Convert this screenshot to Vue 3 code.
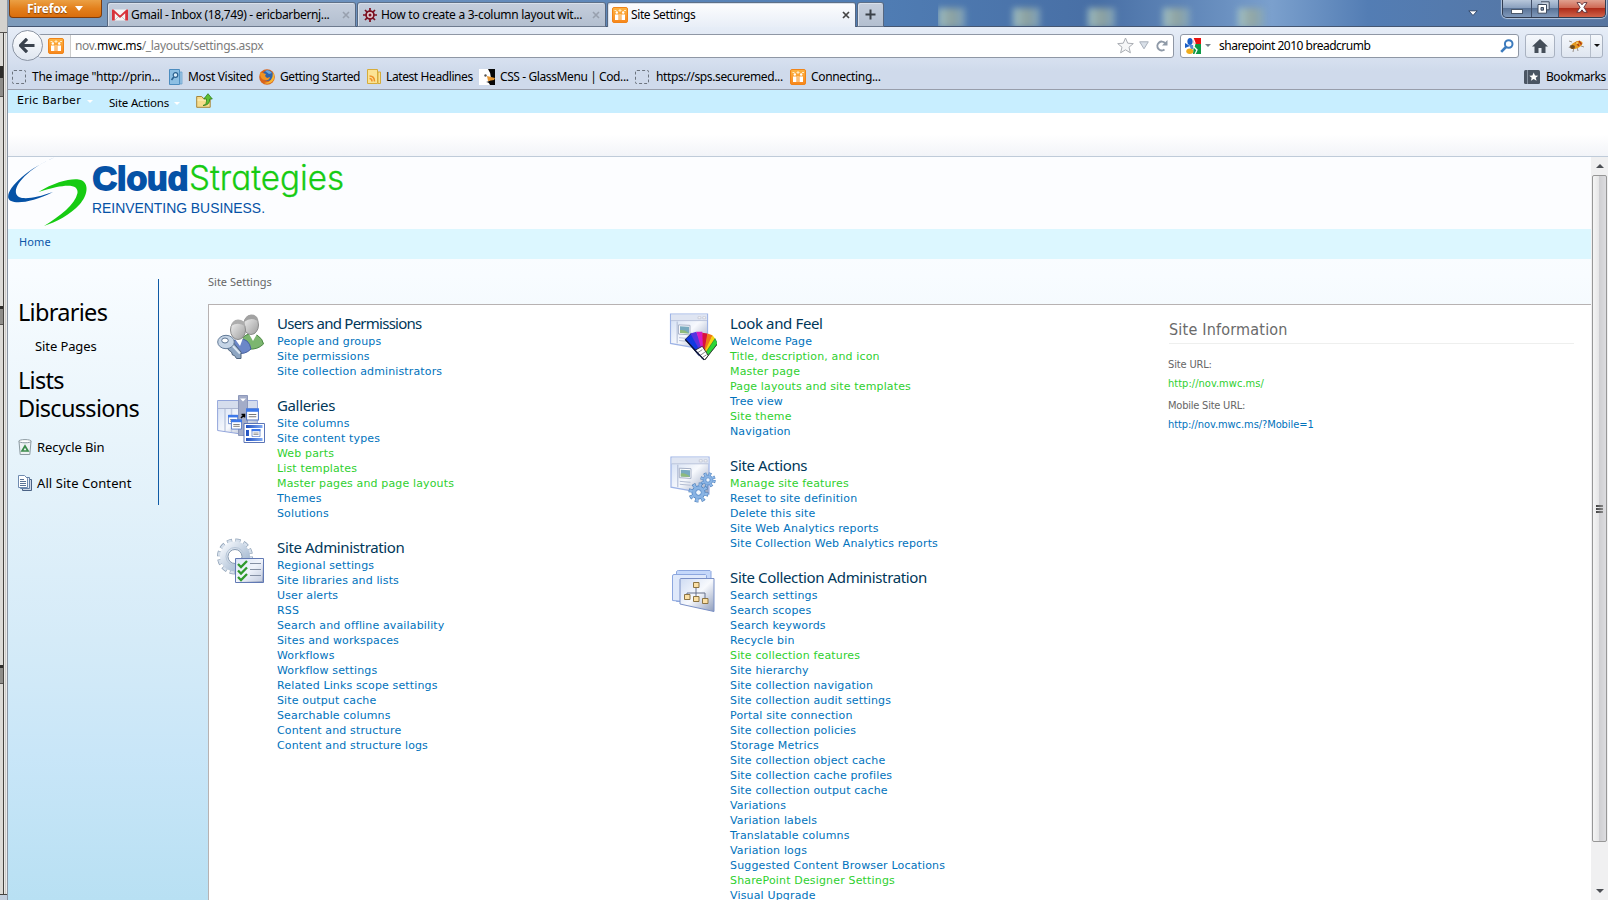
<script setup>
const green = (text) => ({ text, green: true })
const blue = (text) => ({ text, green: false })

const columns = [
  [
    {
      title: 'Users and Permissions',
      icon: 'users',
      links: [blue('People and groups'), blue('Site permissions'), blue('Site collection administrators')],
    },
    {
      title: 'Galleries',
      icon: 'galleries',
      links: [
        blue('Site columns'), blue('Site content types'), green('Web parts'), green('List templates'),
        green('Master pages and page layouts'), blue('Themes'), blue('Solutions'),
      ],
    },
    {
      title: 'Site Administration',
      icon: 'admin',
      links: [
        'Regional settings', 'Site libraries and lists', 'User alerts', 'RSS', 'Search and offline availability',
        'Sites and workspaces', 'Workflows', 'Workflow settings', 'Related Links scope settings',
        'Site output cache', 'Searchable columns', 'Content and structure', 'Content and structure logs',
      ].map(blue),
    },
  ],
  [
    {
      title: 'Look and Feel',
      icon: 'look',
      links: [
        blue('Welcome Page'), green('Title, description, and icon'), green('Master page'),
        green('Page layouts and site templates'), blue('Tree view'), green('Site theme'), blue('Navigation'),
      ],
    },
    {
      title: 'Site Actions',
      icon: 'actions',
      links: [
        green('Manage site features'), blue('Reset to site definition'), blue('Delete this site'),
        blue('Site Web Analytics reports'), blue('Site Collection Web Analytics reports'),
      ],
    },
    {
      title: 'Site Collection Administration',
      icon: 'collection',
      links: [
        blue('Search settings'), blue('Search scopes'), blue('Search keywords'), blue('Recycle bin'),
        green('Site collection features'), blue('Site hierarchy'), blue('Site collection navigation'),
        blue('Site collection audit settings'), blue('Portal site connection'), blue('Site collection policies'),
        blue('Storage Metrics'), blue('Site collection object cache'), blue('Site collection cache profiles'),
        blue('Site collection output cache'), blue('Variations'), blue('Variation labels'),
        blue('Translatable columns'), blue('Variation logs'), blue('Suggested Content Browser Locations'),
        green('SharePoint Designer Settings'), blue('Visual Upgrade'),
      ],
    },
  ],
]
</script>

<template>
  <div class="screen">
    <svg class="defs" width="0" height="0">
      <defs>
        <linearGradient id="gOrange" x1="0" y1="0" x2="0" y2="1">
          <stop offset="0" stop-color="#fdb544" /><stop offset="1" stop-color="#f7861b" />
        </linearGradient>
        <linearGradient id="gPane" x1="0" y1="0" x2="1" y2="1">
          <stop offset="0" stop-color="#cfdcf3" /><stop offset=".5" stop-color="#f7f9fd" /><stop offset="1" stop-color="#8f9dbb" />
        </linearGradient>
        <linearGradient id="gHead" x1="0" y1="0" x2="1" y2="1">
          <stop offset="0" stop-color="#f4f4f4" /><stop offset="1" stop-color="#9c9c9c" />
        </linearGradient>
        <linearGradient id="gGear" x1="0" y1="0" x2="1" y2="1">
          <stop offset="0" stop-color="#f1f5fa" /><stop offset="1" stop-color="#9db3cd" />
        </linearGradient>
        <linearGradient id="gBar" x1="0" y1="0" x2="1" y2="0">
          <stop offset="0" stop-color="#1f4fc0" /><stop offset="1" stop-color="#7fa9f3" />
        </linearGradient>
        <symbol id="people" viewBox="0 0 16 16">
          <rect x=".5" y=".5" width="15" height="15" rx="1.5" fill="url(#gOrange)" stroke="#f08418" />
          <path d="M3 7.500h3.500V13H3zM9.500 7.500H13V13H9.500z" fill="#fff" />
          <circle cx="4.800" cy="5.500" r="1.200" fill="#fff" /><circle cx="11.200" cy="5.500" r="1.200" fill="#fff" />
          <path d="M2.500 3.500h2M8 2v3M6.500 3.500h3M12 3.500h2M8 7v6" stroke="#ffe9c4" stroke-width="1" />
        </symbol>
        <symbol id="window" viewBox="0 0 42 40">
          <path d="M1 1h39v38L1 32z" fill="url(#gPane)" stroke="#9db3e6" stroke-width="1.200" />
          <path d="M1.500 1.500h38V8h-38z" fill="#dfe5f2" />
          <path d="M1.500 8h38" stroke="#b9c3da" />
          <path d="M30 4h3v2h-3zM35 4h3v2h-3z" fill="#fff" stroke="#b2b7c6" stroke-width=".6" />
          <path d="M8 9v23" stroke="#a9b4cf" />
          <path d="M9.500 12.500l12 .5v10l-12-.8z" fill="#fff" stroke="#a2aec4" />
          <path d="M11 14l9.500.5v7l-9.500-.6z" fill="#78aabf" />
          <path d="M11 18q5-1 9.500 3.500L11 21z" fill="#8ebb7b" />
          <path d="M10 26l11 1M10 29l11 1" stroke="#b1bbd2" />
        </symbol>
        <symbol id="cog" viewBox="-12 -12 24 24">
          <circle r="8" fill="none" stroke="#4779b4" stroke-width="7" stroke-dasharray="3.400 2.880" />
          <circle r="7.500" fill="#89b3e3" stroke="#4c82c4" />
          <circle r="8.800" fill="none" stroke="#8fb9e8" stroke-width="4" stroke-dasharray="2.700 4.210" stroke-dashoffset="-.5" />
          <circle r="3.200" fill="#f2f7fd" stroke="#4c82c4" />
        </symbol>
        <symbol id="doc" viewBox="0 0 12 11">
          <path d="M.5.5h11v10H.5z" fill="#fff" stroke="#5679c6" />
          <path d="M0 0h12v3H0z" fill="#3c78ea" />
          <path d="M2.500 5.500h7M2.500 7.500h7" stroke="#777" />
        </symbol>
      </defs>
    </svg>

    <aside class="behind">
      <i class="seg s1"></i><i class="seg s2"></i><i class="seg s3"></i>
    </aside>

    <main class="browser">
      <header class="titlebar">
        <div class="fx-button">Firefox<i class="tri"></i></div>
        <div class="tabs">
          <div class="tab">
            <svg width="16" height="16" viewBox="0 0 16 16"><path d="M0 2.500h16v11H0z" fill="#f5f5f5" /><path d="M3 13l5-5 5 5" fill="none" stroke="#c8c8c8" /><path d="M0 2.500h1.500L8 8.500l6.500-6H16v11h-2.800V6.200L8 11 2.800 6.200v7.300H0z" fill="#d8333a" /></svg>
            <span class="label t1">Gmail - Inbox (18,749) - ericbarbernj...</span>
            <svg class="x" width="8" height="8" viewBox="0 0 8 8"><path d="M1 1l6 6M7 1L1 7" stroke="#98a0ae" stroke-width="1.600" /></svg>
          </div>
          <div class="tab">
            <svg width="16" height="16" viewBox="-8 -8 16 16"><circle r="4" fill="none" stroke="#7b0f20" stroke-width="1.600" /><path d="M0-7V7M-7 0H7M-5-5L5 5M5-5L-5 5" stroke="#7b0f20" stroke-width="1.700" /><circle r="3" fill="#e4ccd2" /><circle r="1.500" fill="#7b0f20" /></svg>
            <span class="label t2">How to create a 3-column layout wit...</span>
            <svg class="x" width="8" height="8" viewBox="0 0 8 8"><path d="M1 1l6 6M7 1L1 7" stroke="#98a0ae" stroke-width="1.600" /></svg>
          </div>
          <div class="tab active">
            <svg width="16" height="16"><use href="#people" /></svg>
            <span class="label t3">Site Settings</span>
            <svg class="x" width="8" height="8" viewBox="0 0 8 8"><path d="M1 1l6 6M7 1L1 7" stroke="#444" stroke-width="1.700" /></svg>
          </div>
          <div class="tab plus">
            <svg width="11" height="11" viewBox="0 0 11 11"><path d="M5.500.5v10M.5 5.500h10" stroke="#3b4148" stroke-width="2" /></svg>
          </div>
        </div>
        <div class="glass">
          <i class="folder" v-for="n in 5" :key="n"></i>
        </div>
        <svg class="tablist" width="10" height="7" viewBox="0 0 10 7"><path d="M.8.8h8.400L5 5.500z" fill="#fff" stroke="#33496b" /></svg>
        <div class="winbtns">
          <span class="wb min"><svg width="14" height="7" viewBox="0 0 14 7"><rect x="1.500" y="1.500" width="11" height="4" fill="#fff" stroke="#4b586b" /></svg></span>
          <span class="wb max"><svg width="13" height="13" viewBox="0 0 13 13"><path d="M4 .8h8.200v8H10" fill="#cdd6e3" stroke="#3f4b5f" /><path d="M1 3.500h8.500v8.700H1z" fill="#fff" stroke="#3f4b5f" /><path d="M4 6.500h2.500v2.700H4z" fill="#8796ad" stroke="#3f4b5f" /></svg></span>
          <span class="wb close"><svg width="12" height="11" viewBox="0 0 12 11"><path d="M1 .6h3.200L6 2.800 7.800.6H11L7.900 5.300l3.300 5H7.800L6 7.800l-1.800 2.500H.8l3.300-5z" fill="#fff" stroke="#5a3038" stroke-width=".9" /></svg></span>
        </div>
      </header>

      <section class="navbar">
        <div class="back"><svg width="17" height="15" viewBox="0 0 17 15"><path d="M8 .8L1.500 7.500 8 14.200M2 7.500h13.500" fill="none" stroke="#3a424d" stroke-width="3.200" /></svg></div>
        <div class="urlbar">
          <span class="ident"><svg width="16" height="16"><use href="#people" /></svg></span>
          <span class="url">nov.<b>mwc.ms</b>/_layouts/settings.aspx</span>
          <svg class="star" width="17" height="17" viewBox="0 0 17 17"><path d="M8.500 1l2.200 5.200 5.600.4-4.300 3.600 1.400 5.600-4.900-3-4.900 3L5 10.200.7 6.600l5.600-.4z" fill="#f6f7f8" stroke="#a9adb3" /></svg>
          <svg width="10" height="9" viewBox="0 0 10 9"><path d="M.7.8h8.600L5 7.800z" fill="#d9e0e8" stroke="#a8b0bb" /></svg>
          <svg class="reload" width="12" height="12" viewBox="0 0 12 12"><path d="M8.500 9.500A4.400 4.400 0 1 1 9 3" fill="none" stroke="#8e99a7" stroke-width="2" /><path d="M11.500 0v5.500H6z" fill="#8e99a7" /></svg>
        </div>
        <div class="search">
          <svg width="16" height="16" viewBox="0 0 16 16"><path d="M8 0h8v6H9z" fill="#e8110f" /><path d="M9 6h7v10H8z" fill="#0d9a46" /><ellipse cx="5" cy="3.500" rx="2.600" ry="3.500" fill="#1b5fc6" /><path d="M0 5l5 3-5 2z" fill="#1b5fc6" /><path d="M4 7h4v4H6z" fill="#5a8cd8" /><ellipse cx="4.800" cy="13.300" rx="3.500" ry="2.700" fill="#f0ac1b" /><path d="M8 0l2 5-1 4 3 3-2 4" fill="none" stroke="#fff" stroke-width="1.300" /></svg>
          <i class="dd"></i>
          <span class="query">sharepoint 2010 breadcrumb</span>
          <svg width="14" height="14" viewBox="0 0 14 14"><circle cx="8.700" cy="5" r="3.800" fill="none" stroke="#3d7bbd" stroke-width="2" /><path d="M6 8L1.200 12.800" stroke="#3d7bbd" stroke-width="2.600" /></svg>
        </div>
        <div class="tbtn home"><svg width="16" height="14" viewBox="0 0 16 14"><path d="M8 0l8 7.500h-2.500V14h-4V9h-3v5h-4V7.500H0z" fill="#454e59" /></svg></div>
        <div class="tbtn bug">
          <span class="bugimg"><svg width="17" height="14" viewBox="0 0 17 14"><path d="M3 6L1 9M6 8l-1 5M9 8l1 4M4 3L1 2M13 7l3 1" stroke="#9a938c" /><ellipse cx="8.500" cy="6" rx="6.500" ry="3.400" transform="rotate(-25 8.500 6)" fill="#e59a20" /><ellipse cx="4.500" cy="8" rx="2.500" ry="2" fill="#6d4a20" /><path d="M8 3l3 4M11 2l2.500 3.500" stroke="#b13c16" stroke-width="1.500" /><circle cx="9" cy="4" r="1" fill="#ffe27a" /></svg></span>
          <span class="bugdd"><i class="dd dark"></i></span>
        </div>
      </section>

      <section class="bookmarks">
        <i class="dashed"></i><span class="bm b1">The image "http://prin...</span>
        <svg width="16" height="16" viewBox="0 0 16 16"><path d="M1.500.5h10v15h-10z" fill="#8dbfe3" stroke="#4c8cbf" /><path d="M12 3h2v12h-2z" fill="#a7cdea" stroke="#5d98c6" stroke-width=".7" /><circle cx="7.500" cy="6" r="2.300" fill="#d9edfa" stroke="#2c618f" stroke-width="1.200" /><path d="M5.800 8L3.500 11" stroke="#2c618f" stroke-width="1.600" /></svg>
        <span class="bm b2">Most Visited</span>
        <svg width="16" height="16" viewBox="0 0 16 16"><circle cx="8" cy="8" r="7.800" fill="#d9641b" /><circle cx="8.800" cy="6.500" r="5.300" fill="#2e63ab" /><path d="M6 2q4-2 7 2l-3 1z" fill="#6aa7de" /><path d="M1 3q2 1 3 1l3 1-1 2 2 2 3-1q-1 4-5 3Q1 11 1 3z" fill="#f29422" /><path d="M14 3q3 6-1 10-4 3-8 1 9 0 9-11z" fill="#f7b632" /></svg>
        <span class="bm b3">Getting Started</span>
        <svg width="14" height="15" viewBox="0 0 14 15"><path d="M.5.5h10v14H.5zM11 3h2.500v11.500H11z" fill="#fbe394" stroke="#d6ac3a" /><path d="M2.500 7q5 0 5 5.500M2.500 9.500q2.500 0 2.500 3" fill="none" stroke="#ef922c" stroke-width="1.500" /></svg>
        <span class="bm b4">Latest Headlines</span>
        <svg width="16" height="16" viewBox="0 0 16 16"><path d="M0 0h16v16H0z" fill="#fff" /><path d="M9 0h7v16h-5q-1-3-4-3 5-1 5-4 0-5-3-9z" fill="#080808" /><path d="M8 7l8 2-1 2-6 1z" fill="#e7962f" /><circle cx="6.500" cy="6.500" r="1.200" fill="#555" /></svg>
        <span class="bm b5">CSS - GlassMenu | Cod...</span>
        <i class="dashed"></i><span class="bm b6">https://sps.securemed...</span>
        <svg width="16" height="16"><use href="#people" /></svg>
        <span class="bm b7">Connecting...</span>
        <span class="spring"></span>
        <svg width="16" height="14" viewBox="0 0 16 14"><rect width="16" height="14" rx="1.500" fill="#4a5563" /><path d="M3.500 0v14" stroke="#8793a1" /><path d="M9.700 2.500l1.300 3 3.200.2-2.500 2 .9 3.100-2.900-1.800-2.800 1.800.8-3.100-2.400-2 3.100-.2z" fill="#fff" /></svg>
        <span class="bm b8">Bookmarks</span>
      </section>

      <section class="ribbon">
        <span class="user">Eric Barber</span><i class="wtri"></i>
        <span class="sact">Site Actions</span><i class="wtri w2"></i>
        <svg width="17" height="15" viewBox="0 0 17 15"><path d="M.7 3.500h5l1.500 1.800h7v9H.7z" fill="#f6dc8c" stroke="#a5853a" /><path d="M1.500 7h12" stroke="#fff2c4" /><path d="M7 12.500q4-.5 3.500-6.500H7.800L12 .7l4.300 5.300h-2.600q0 6.500-6.700 6.500z" fill="#5fc032" stroke="#2f7d1b" stroke-width=".8" /></svg>
      </section>
      <section class="blank"></section>

      <div class="page">
        <div class="content">
          <div class="logo">
            <svg width="345" height="72" viewBox="0 0 345 72">
              <path d="M47 .3C20 11-1 31 .2 40.500 1 48 22 47 45 35 25 42 9.500 44 8 36 6 27 24 9 47 .3z" fill="#0552a6" />
              <path d="M30.500 35C48 24 66 20.500 73 23c9 4 6 16-1 24-10 11-24 18-36 22 16-10 31-21 33.500-33 1-9-11-10-39-1z" fill="#16cb12" />
              <text class="cloud" x="84.500" y="33" textLength="96" lengthAdjust="spacingAndGlyphs">Cloud</text>
              <text class="strat" x="181" y="33" textLength="155" lengthAdjust="spacingAndGlyphs">Strategies</text>
              <text class="reinv" x="84" y="55.500" textLength="173" lengthAdjust="spacingAndGlyphs">REINVENTING BUSINESS.</text>
            </svg>
          </div>
          <nav class="topnav">Home</nav>
          <div class="body">
            <aside class="quick">
              <h2 class="q1">Libraries</h2>
              <p class="sp">Site Pages</p>
              <h2 class="q2">Lists</h2>
              <h2 class="q3">Discussions</h2>
              <p class="ic rb">
                <svg width="14" height="16" viewBox="0 0 14 16"><path d="M1 2.500h12L11.800 15.500H2.200z" fill="#eef2f3" stroke="#8c9aa1" /><ellipse cx="7" cy="2.200" rx="6.300" ry="1.600" fill="#fff" stroke="#8c9aa1" /><path d="M7 7l3 5H4z" fill="none" stroke="#3c8c4c" stroke-width="1.700" /></svg>
                <span>Recycle Bin</span>
              </p>
              <p class="ic asc">
                <svg width="14" height="16" viewBox="0 0 14 16"><path d="M4.500 4.500h9v11h-9z" fill="#cfd9e8" stroke="#4a6285" /><path d="M2.500 2.500h9v11h-9z" fill="#e6edf6" stroke="#6580a6" /><path d="M.5.500h6l3 3v9h-9z" fill="#fff" stroke="#6f8bb0" /><path d="M2 4.500h4M2 6.500h6M2 8.500h6M2 10.500h6" stroke="#5a7396" /></svg>
                <span>All Site Content</span>
              </p>
            </aside>
            <div class="right">
              <div class="crumb">Site Settings</div>
              <div class="panel">
                <div class="col" v-for="(col, ci) in columns" :key="ci">
                  <section class="group" :class="g.icon" v-for="g in col" :key="g.title">
                    <div class="gicon">
                      <svg v-if="g.icon === 'users'" width="48" height="48" viewBox="0 0 48 48">
                        <path d="M25 24q8-7 15-3 6 4 6.500 9-6 6-15 5z" fill="#7cb66f" stroke="#4e8846" />
                        <path d="M32 20l8 0-4 7z" fill="#fff" />
                        <ellipse cx="34" cy="11" rx="7.500" ry="9.500" fill="url(#gHead)" stroke="#8a8a8a" />
                        <path d="M27 8q1-7 7-7.500 7 0 7.500 7-7-5-14.500.5z" fill="#a2a2a2" />
                        <path d="M14 31q2-6 8-6 10-1 12 10-6 6-14 4z" fill="#6b87c8" stroke="#45609f" />
                        <path d="M18 25l8-1-3 8z" fill="#fff" />
                        <ellipse cx="21" cy="16" rx="7.500" ry="9.500" fill="url(#gHead)" stroke="#8a8a8a" />
                        <path d="M14 12q1-6 7-6.500 7 0 7.500 7-7-5-14.500-.5z" fill="#adadad" />
                        <path d="M10 32l5-5 9 11v6.500h-4.500l-2-3-2-.5-1-3-3-2z" fill="#8ea6c2" stroke="#50657f" />
                        <path d="M14 30l9 9.500" stroke="#dbe6f2" stroke-width="2" />
                        <ellipse cx="9" cy="28" rx="8.300" ry="6.700" fill="#c6d5e6" stroke="#627a97" />
                        <ellipse cx="8" cy="26.500" rx="3.300" ry="2.500" fill="#fff" stroke="#5d7592" />
                      </svg>
                      <svg v-else-if="g.icon === 'galleries'" width="48" height="48" viewBox="0 0 48 48">
                        <path d="M.6 5.500h39.800v36L.6 35.500z" fill="url(#gPane)" stroke="#92a5db" />
                        <path d="M1 6h39v7H1z" fill="#d5dded" /><path d="M1 13.500h39" stroke="#abb6d1" />
                        <path d="M8 14v22M14.500 14v23" stroke="#c0cae0" stroke-width="1.500" />
                        <path d="M21.500.5h9v40h-9z" fill="#a3acc8" stroke="#8d98ba" /><path d="M23 3.500h6l-3 3z" fill="#fff" />
                        <use href="#doc" x="11" y="19" width="10" height="11" /><use href="#doc" x="14" y="24" width="11" height="11" /><use href="#doc" x="29" y="13" width="13" height="13" />
                        <path d="M24 23l3-3M24.500 19.500h3v3" stroke="#000" stroke-width="1.500" fill="none" />
                        <path d="M27 28.500h20.500v19H27z" fill="#fff" stroke="#5b75b7" />
                        <path d="M29 30h16.500v3H29zM29 43h16.500v3H29zM29 35h3v6h-3z" fill="url(#gBar)" />
                        <use href="#doc" x="34" y="34" width="10" height="8" />
                      </svg>
                      <svg v-else-if="g.icon === 'admin'" width="48" height="48" viewBox="0 0 48 48">
                        <g transform="translate(18 18.500)">
                          <circle r="15.500" fill="none" stroke="#8fa1b6" stroke-width="5" stroke-dasharray="5 3.100" />
                          <circle r="15.500" fill="none" stroke="#d6e0ec" stroke-width="3.500" stroke-dasharray="4 4.100" stroke-dashoffset="-.5" />
                          <circle r="11" fill="none" stroke="url(#gGear)" stroke-width="8" />
                          <circle r="7" fill="#fff" stroke="#8699b0" />
                          <circle r="9" fill="none" stroke="#b8c7d9" />
                        </g>
                        <path d="M18.500 20.500h28v24h-28z" fill="url(#gPane)" stroke="#6179b4" />
                        <path d="M20 22h25v21H20z" fill="#e9effa" opacity=".55" />
                        <path d="M33 25.500h11M33 31.500h11M33 37.500h11" stroke="#8590a4" />
                        <path d="M21 26l3 3 6-6M21 32.500l3 3 6-6M21 39l3 3 6-6" fill="none" stroke="#2f9a2b" stroke-width="2.300" />
                      </svg>
                      <svg v-else-if="g.icon === 'look'" width="48" height="48" viewBox="0 0 48 48">
                        <use href="#window" x="0" y="0" width="41" height="38" />
                        <g transform="translate(35 46) scale(.85)">
                          <path d="M-6-4l-16-19 7-7L0-8z" fill="#103ae0" stroke="#071b64" />
                          <path d="M-4-8l-12-22 7-2L1-8z" fill="#5633e0" />
                          <path d="M-2-8l-7-24h7L2-8z" fill="#d61bc0" />
                          <path d="M-1-8l-1-23 6 1-2 23z" fill="#d9123c" />
                          <path d="M0-8L4-30l6 2L2-6z" fill="#ef7a16" />
                          <path d="M0-7l10-21 3 4L3-5z" fill="#f4d511" />
                          <path d="M1-6l12-18 3 6L4-3z" fill="#2bd637" stroke="#17602a" stroke-width=".6" />
                          <path d="M-11-10l9-5 7 11-4 5z" fill="#fff" stroke="#222" />
                          <path d="M-8-7l6-4M-5-4l6-4M-3-1l6-4" stroke="#777" />
                          <path d="M-22-23L0 1" stroke="#0a1238" stroke-width="1.500" /><path d="M1 1l15-19" stroke="#333" />
                        </g>
                      </svg>
                      <svg v-else-if="g.icon === 'actions'" width="48" height="48" viewBox="0 0 48 48">
                        <use href="#window" x="1" y="0" width="41" height="39" />
                        <use href="#cog" x="31" y="16" width="16" height="16" />
                        <use href="#cog" x="19" y="26" width="21" height="21" />
                      </svg>
                      <svg v-else width="48" height="48" viewBox="0 0 48 48">
                        <path d="M7.500 1.500Q8 .5 9.500.5h31.500l1 1v30H7.500z" fill="#c5d8fa" stroke="#8ca7df" />
                        <path d="M3.500 6Q3.500 4.500 5 4.500h31.500l1 1v28l-34-3z" fill="#dfe9fb" stroke="#8ca7df" />
                        <path d="M11 9.500q0-1 1-1h33v33L11 34z" fill="url(#gPane)" stroke="#7a90c6" />
                        <path d="M27 18v10M18 26v-3h18v5" fill="none" stroke="#66718a" />
                        <path d="M24.500 12.500h5.500v5h-5.500zM15.500 24.500H21v5h-5.500zM24.500 26.500H30v5h-5.500zM33.500 28.500H39v5h-5.500z" fill="#fbe0a5" stroke="#8c7443" />
                      </svg>
                    </div>
                    <div class="gbody">
                      <h3>{{ g.title }}</h3>
                      <div class="links">
                        <a v-for="l in g.links" :key="l.text" :class="{ green: l.green }">{{ l.text }}</a>
                      </div>
                    </div>
                  </section>
                </div>
                <div class="info">
                  <h4>Site Information</h4>
                  <p class="i1">Site URL:</p>
                  <p class="i2 green">http://nov.mwc.ms/</p>
                  <p class="i3">Mobile Site URL:</p>
                  <p class="i4">http://nov.mwc.ms/?Mobile=1</p>
                </div>
              </div>
            </div>
          </div>
        </div>
        <div class="scroll">
          <div class="sarrow"><i class="up"></i></div>
          <div class="thumb"><i></i><i></i><i></i></div>
          <div class="sarrow bot"><i class="down"></i></div>
        </div>
      </div>
    </main>
  </div>
</template>

<style>
html, body { margin: 0; overflow: hidden; }
</style>

<style scoped>
* { box-sizing: border-box; }
h2, h3, h4, p { margin: 0; font-weight: 400; }
svg { display: block; flex: none; }
i { display: block; flex: none; }
.defs { position: absolute; }
.screen { display: flex; width: 1608px; height: 900px; overflow: hidden; font-family: "Noto Sans", "Open Sans", sans-serif; font-size: 12px; color: #000; white-space: nowrap; }

.behind { position: relative; width: 8px; flex: none; background: linear-gradient(90deg, #dcdad6 0 3px, #45433f 3px 4px, #e9e7e5 4px 5px, #cfcdca 5px 6px, #ebebea 6px 7px, #8b95a3 7px 8px); }
.behind::before { content: ""; position: absolute; left: 0; top: 0; width: 7px; height: 32px; background: #d4d2ce; border-bottom: 1px solid #55524f; }
.behind::after { content: ""; position: absolute; left: 0; bottom: 0; width: 7px; height: 5px; background: #c2cedd; border-top: 1px solid #45433f; }
.seg { position: absolute; left: 0; width: 3px; height: 19px; background: #8f8d89; border-top: 3px solid #2e2c2a; border-bottom: 1px solid #55524f; }
.seg.s1 { top: 66px; height: 31px; border-top-width: 12px; }
.seg.s2 { top: 306px; }
.seg.s3 { top: 665px; }

.browser { display: flex; flex-direction: column; width: 1600px; height: 900px; }

.titlebar { display: flex; height: 27px; flex: none; border-bottom: 1px solid #445672; background: linear-gradient(90deg, #7d9bbb 0, #6c91be 22%, #4f7cb3 55%, #486fa5 68%, #6a90c0 76%, #7ba0cd 79%, #537db4 85%, #56749f 100%); }
.fx-button { display: flex; align-items: center; justify-content: center; gap: 8px; width: 93px; height: 18px; margin-left: 1px; padding-right: 1px; background: linear-gradient(#eba044, #e3801c 50%, #d96d0c); border: 1px solid #7e3c0c; border-top: 0; border-radius: 0 0 4px 4px; color: #fff; font-weight: 700; font-size: 12px; letter-spacing: -.2px; line-height: 16px; text-shadow: 0 1px 1px #8a4508; }
.tri { border: 4px solid transparent; border-top: 5px solid #fff; border-bottom: 0; }
.tabs { display: flex; gap: 1px; margin: 2px 0 0 5px; }
.tab { display: flex; align-items: center; width: 249px; height: 25px; padding: 0 5px 0 4px; border: 1px solid #566780; border-top-color: #5e7088; border-bottom: 1px solid #6d7a8e; border-radius: 3px 3px 0 0; background: linear-gradient(#c5cedc, #b3bfd0); box-shadow: inset 1px 1px 0 #d9e0ea; }
.tab.active { background: linear-gradient(#fdfdfe, #e8eef7); border-bottom: 0; width: 249px; }
.tab.plus { width: 27px; padding: 0; justify-content: center; }
.label { flex: 1; margin-left: 3px; line-height: 20px; }
.t1 { letter-spacing: -.34px; }
.t2 { letter-spacing: -.28px; }
.t3 { letter-spacing: -.4px; }
.glass { display: flex; gap: 48px; margin-left: 54px; padding-top: 8px; flex: 1; overflow: hidden; }
.folder { width: 27px; height: 20px; background: linear-gradient(90deg, #a9c8c8, #98a99d 50%, #86a8bf); filter: blur(3px); opacity: .85; }
.tablist { margin: 10px 24px 0 0; }
.winbtns { display: flex; width: 104px; height: 18px; margin-right: 2px; border: 1px solid #313c50; border-top: 0; border-radius: 0 0 5px 5px; overflow: hidden; box-shadow: 0 0 1px 1px #b4c6de; }
.wb { display: flex; align-items: center; justify-content: center; background: linear-gradient(#b8c7da, #8ba1bf 45%, #5b7497 50%, #8099bb); border-right: 1px solid #42506a; }
.min { width: 29px; padding-top: 5px; }
.max { width: 27px; padding-right: 3px; padding-bottom: 2px; }
.close { flex: 1; border: 0; padding-bottom: 2px; background: linear-gradient(#e0a08f, #cf6a56 45%, #ae2c1a 50%, #d0634a); }

.navbar { display: flex; align-items: center; height: 36px; flex: none; padding: 1px 5px 0 4px; background: linear-gradient(#e6edf7, #d4deee); }
.back { position: relative; z-index: 1; display: flex; align-items: center; justify-content: center; width: 31px; height: 31px; flex: none; border: 1px solid #8b94a3; border-radius: 50%; background: linear-gradient(#fff, #dfe6f0); }
.urlbar { display: flex; align-items: center; width: 1136px; height: 24px; flex: none; margin-left: -5px; border: 1px solid #8f97a5; border-radius: 3px; background: #fff; }
.ident { display: flex; align-items: center; width: 32px; height: 22px; padding-left: 9px; border-right: 1px solid #ccc; background: #f1f2f4; }
.url { flex: 1; margin-left: 4px; color: #7c7c7c; letter-spacing: -.32px; }
.url b { font-weight: 400; color: #000; }
.star { margin-right: 5px; }
.reload { margin: 0 5px 0 7px; }
.search { display: flex; align-items: center; width: 339px; height: 24px; margin-left: 6px; padding: 0 4px 0 4px; border: 1px solid #8f97a5; border-radius: 3px; background: #fff; flex: none; }
.dd { margin-left: 4px; border: 3px solid transparent; border-top: 3px solid #77818c; border-bottom: 0; }
.dd.dark { margin: 0; border-top-color: #111; }
.query { flex: 1; margin-left: 8px; letter-spacing: -.5px; }
.tbtn { display: flex; align-items: center; justify-content: center; height: 24px; flex: none; border: 1px solid #a9b2c1; border-radius: 3px; background: linear-gradient(#f5f8fc, #dfe6f0); }
.home { width: 30px; margin-left: 6px; }
.bug { width: 42px; margin-left: 6px; }
.bugimg { display: flex; justify-content: center; width: 28px; }
.bugdd { display: flex; align-items: center; justify-content: center; flex: 1; height: 22px; border-left: 1px solid #b5bdca; }

.bookmarks { display: flex; align-items: center; height: 27px; flex: none; padding: 1px 3px 0 4px; background: linear-gradient(#d4deee, #cfdaeb 30%); border-bottom: 1px solid #989eab; }
.dashed { width: 14px; height: 14px; border: 1px dashed #6c747e; border-radius: 2px; }
.bm { line-height: 20px; flex: none; letter-spacing: -.4px; }
.b1 { width: 136px; margin-left: 6px; letter-spacing: -.28px; }
.b2 { width: 71px; margin-left: 4px; letter-spacing: -.32px; }
.b3 { width: 87px; margin-left: 5px; letter-spacing: -.42px; }
.b4 { width: 93px; margin-left: 5px; }
.b5 { width: 135px; margin-left: 5px; }
.b6 { width: 134px; margin-left: 7px; letter-spacing: -.37px; }
.b7 { margin-left: 5px; letter-spacing: -.35px; }
.b8 { margin-left: 6px; letter-spacing: -.45px; width: 59px; }
.spring { flex: 1; }

.ribbon { display: flex; height: 23px; flex: none; padding-left: 9px; background: #c8eeff; }
.user { width: 70px; font-family: "DejaVu Sans", sans-serif; font-size: 11px; line-height: 22px; letter-spacing: .25px; }
.wtri { margin: 10px 0 0 0; border: 3px solid transparent; border-top: 3px solid #fff; border-bottom: 0; }
.sact { width: 65px; margin-left: 16px; font-size: 11.500px; line-height: 25px; letter-spacing: -.2px; }
.w2 { margin-top: 12px; }
.ribbon svg { margin: 3px 0 0 16px; }
.blank { height: 44px; flex: none; background: linear-gradient(#fff 50%, #f2f4f8); border-bottom: 1px solid #bfcbd9; }

.page { display: flex; height: 743px; }
.content { width: 1583px; height: 743px; overflow: hidden; background: linear-gradient(#fff, #f8fcff 16%, #e8f4fb 38%, #d5ebf8 65%, #c9e6f8 80%, #b8e0f3); }
.logo { height: 72px; background: #fcfdff; }
.cloud { font: 700 34px "Liberation Sans", sans-serif; fill: #0552a6; stroke: #0552a6; stroke-width: 1.800px; }
.strat { font: 300 34px Inter, Lato, sans-serif; font-feature-settings: "cv11"; fill: #16cb12; stroke: #16cb12; stroke-width: .3px; }
.reinv { font: 400 14.500px "Liberation Sans", sans-serif; fill: #0552a6; }
.topnav { height: 30px; padding-left: 11px; background: #dcf7ff; color: #0b55a8; font-size: 11px; letter-spacing: .1px; line-height: 26px; }
.body { display: flex; height: 641px; }
.quick { width: 151px; height: 226px; margin-top: 20px; padding-left: 10px; border-right: 1px solid #0f5aa5; }
.quick h2 { font-size: 23.500px; line-height: 28px; letter-spacing: -.7px; }
.q1 { margin-top: 19px; }
.quick .sp { margin-top: 10px; padding-left: 17px; height: 20px; font-size: 13px; line-height: 20px; letter-spacing: -.1px; }
.quick .q2 { margin-top: 10px; }
.ic { display: flex; align-items: center; height: 20px; font-size: 13px; line-height: 20px; gap: 5px; }
.quick .rb { margin-top: 15px; letter-spacing: -.08px; }
.quick .asc { margin-top: 16px; letter-spacing: .08px; }
.right { flex: 1; margin-left: 49px; }
.crumb { height: 45px; padding-top: 13px; color: #666; font-size: 11px; line-height: 20px; }
.panel { display: flex; height: 610px; padding: 8px 0 0 8px; border-left: 1px solid #b7b2b2; border-top: 1px solid #b7b2b2; background: #fff; }
.col { width: 453px; }
.group { display: flex; margin-bottom: 16px; }
.gicon { width: 60px; flex: none; padding-top: 1px; }
.galleries .gicon, .look .gicon { padding-top: 0; }
.look .gicon, .actions .gicon, .collection .gicon { margin-left: -1px; width: 61px; }
.collection .gicon { padding-top: 3px; }
h3 { height: 20px; color: #003759; font-size: 15px; line-height: 20px; letter-spacing: -.36px; }
.users h3 { letter-spacing: -.74px; }
.links { padding-top: 1px; }
.links a { display: block; height: 15px; color: #0072bc; font: 11px/15px "DejaVu Sans", sans-serif; letter-spacing: .14px; }
.collection .links a { letter-spacing: .16px; }
.links a.green, .info .green { color: #2fd02f; }
.info { width: 405px; margin-left: 46px; }
h4 { height: 31px; padding-top: 6px; border-bottom: 1px solid #eeefee; color: #6a6a6a; font: 16px/22px "DejaVu Sans Condensed", "DejaVu Sans", sans-serif; letter-spacing: .2px; }
.info p { height: 20px; margin-left: -1px; font: 11px/20px "DejaVu Sans Condensed", "DejaVu Sans", sans-serif; color: #666; letter-spacing: -.15px; }
.info .i1 { margin-top: 11px; }
.info .i2 { margin-top: -1px; letter-spacing: .03px; }
.info .i3 { margin-top: 2px; letter-spacing: -.22px; }
.info .i4 { margin-top: -1px; color: #0072bc; letter-spacing: -.07px; }

.scroll { display: flex; flex-direction: column; width: 17px; height: 743px; padding-left: 1px; background: #f0f0f1; }
.sarrow { display: flex; align-items: center; justify-content: center; height: 18px; }
.up { border: 4px solid transparent; border-bottom: 4px solid #4c4f54; border-top: 0; }
.down { border: 4px solid transparent; border-top: 4px solid #4c4f54; border-bottom: 0; }
.thumb { display: flex; flex-direction: column; align-items: center; justify-content: center; gap: 1px; height: 667px; width: 15px; border: 1px solid #979797; border-radius: 2px; background: linear-gradient(90deg, #f5f5f5, #e6e6e7 45%, #cfcfd2 50%, #dcdcdf); }
.thumb i { width: 7px; height: 2px; background: linear-gradient(90deg, #444, #888); }
.bot { margin-top: 40px; }
</style>
